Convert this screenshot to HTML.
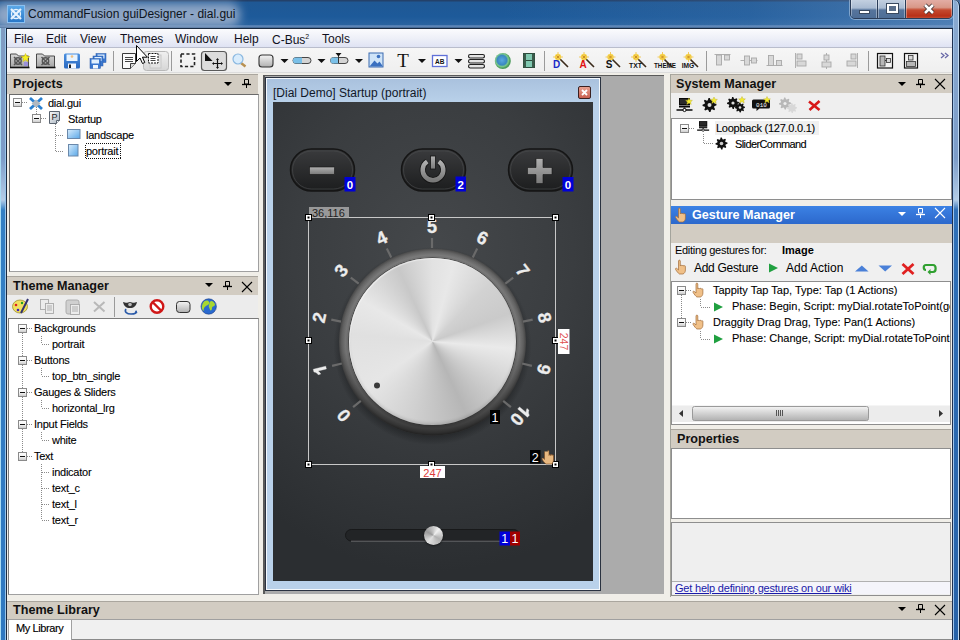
<!DOCTYPE html>
<html><head><meta charset="utf-8">
<style>
*{box-sizing:border-box;margin:0;padding:0}
html,body{width:960px;height:640px;overflow:hidden}
body{position:relative;background:#5f8bbd;font-family:"Liberation Sans",sans-serif;font-size:11px;color:#000}
.a{position:absolute}
.t{position:absolute;white-space:nowrap;line-height:1}
#title{left:0;top:0;width:960px;height:28px;background:linear-gradient(#23416a 0,#23416a 1px,#1f5894 2px,#1d5a9a 60%,#2a639f 88%,#6a90c0 93%,#3a5f8a 100%)}
#client{left:6px;top:28px;width:947px;height:612px;background:#f0eee8;border-left:1px solid #1a2a40;border-top:1px solid #1a2a40;border-right:1px solid #1e3050}
#menu{left:7px;top:29px;width:945px;height:19px;background:linear-gradient(#fbfbfd,#eef0f8 50%,#dfe3f3);border-bottom:1px solid #b9bdcc}
#menu .t{font-size:12px;top:4px;color:#101020}
#tb{left:7px;top:48px;width:945px;height:25px;background:linear-gradient(#f6f6f6,#efefef);border-bottom:1px solid #dcdcdc}
.hdr{position:absolute;background:#d2ccc2;border-top:1px solid #aaa69e}
.hdr .t{font-weight:bold;font-size:12.6px;color:#111;left:6px;top:3px}
.box{position:absolute;background:#fff;border:1px solid #8e8e8e}
.gt .t{letter-spacing:0 !important}
.tree .t{font-size:11px;color:#000;letter-spacing:-0.25px;-webkit-text-stroke:0.1px #000}
</style></head><body>
<div class="a" id="title"></div>
<div class="a" style="left:500px;top:0;width:460px;height:28px;background:linear-gradient(90deg,rgba(110,150,200,0) 0,rgba(110,150,200,0.15) 250px,rgba(130,165,210,0.45) 460px)"></div>
<div class="a" style="left:-6px;top:3px;width:246px;height:24px;background:#8ea6c6;border-radius:10px;filter:blur(5px)"></div>
<div class="a" style="left:7px;top:5px;width:18px;height:18px;background:linear-gradient(#5aa8e8,#2a78c8);border:1px solid #8ac0f0"></div>
<svg class="a" style="left:7px;top:5px" width="18" height="18"><path d="M4 4l10 10M14 4l-10 10" stroke="#e8f4ff" stroke-width="2.2"/><circle cx="9" cy="9" r="4.5" fill="none" stroke="#e8f4ff" stroke-width="1.3"/></svg>
<div class="a" style="left:850px;top:-2px;width:103px;height:21px;border:1px solid #2a3c58;border-radius:0 0 5px 5px;overflow:hidden;box-shadow:0 0 0 1px rgba(200,220,240,0.5)">
 <div class="a" style="left:0;top:0;width:27px;height:20px;background:linear-gradient(#c6d2e2 0,#a9bbd2 45%,#56749c 55%,#4d6d96 100%);border-right:1px solid #2a3c58;box-shadow:inset 0 0 0 1px rgba(255,255,255,0.35)"></div>
 <div class="a" style="left:27px;top:0;width:28px;height:20px;background:linear-gradient(#c6d2e2 0,#a9bbd2 45%,#56749c 55%,#4d6d96 100%);border-right:1px solid #2a3c58;box-shadow:inset 0 0 0 1px rgba(255,255,255,0.35)"></div>
 <div class="a" style="left:55px;top:0;width:46px;height:20px;background:linear-gradient(#e4b0a8 0,#d89888 42%,#c44a30 55%,#b83018 85%,#c85a40 100%);box-shadow:inset 0 0 0 1px rgba(255,255,255,0.35)"></div>
</div>
<div class="a" style="left:859px;top:10px;width:11px;height:4px;background:#fff;border:1px solid #3a4a60"></div>
<div class="a" style="left:887px;top:4px;width:11px;height:9px;background:#5a6e8a;border:2px solid #fff;outline:1px solid #3a4a60"></div>
<svg class="a" style="left:922px;top:2px" width="14" height="14"><path d="M3 3l8 8M11 3l-8 8" stroke="#3a2a2a" stroke-width="4.2"/><path d="M3 3l8 8M11 3l-8 8" stroke="#fff" stroke-width="2.6"/></svg>
<div class="t" style="left:28px;top:8px;font-size:12px;color:#0c1420">CommandFusion guiDesigner - dial.gui</div>
<div class="a" id="client"></div>
<div class="a" style="left:0;top:28px;width:6px;height:612px;background:linear-gradient(#809cc2 0,#7c9cc8 130px,#b4cce6 172px,#3480c4 182px,#2f78c0 612px);border-left:1px solid #a8dcf4;border-right:1px solid #98c4ea"></div>
<div class="a" style="left:953px;top:0px;width:7px;height:640px;border-top-right-radius:6px;background:linear-gradient(#8aaad0 0,#7c9cc8 158px,#b4cce6 200px,#2f70b8 210px,#2762a8 640px);border-left:1px solid #a0c4ea;border-right:1px solid #0e1e34;box-shadow:inset -1px 0 0 #c0d8f0"></div>
<div class="a" id="menu">
 <div class="t" style="left:7px">File</div>
 <div class="t" style="left:39px">Edit</div>
 <div class="t" style="left:73px">View</div>
 <div class="t" style="left:113px">Themes</div>
 <div class="t" style="left:168px">Window</div>
 <div class="t" style="left:227px">Help</div>
 <div class="t" style="left:265px">C-Bus<span style="font-size:7px;vertical-align:5px">2</span></div>
 <div class="t" style="left:315px">Tools</div>
</div>
<div class="a" id="tb"></div>

<!-- left dock -->
<div class="hdr" style="left:7px;top:74px;width:251px;height:20px"><div class="t" style="top:3px">Projects</div></div>
<div class="box tree" style="left:9px;top:94px;width:250px;height:178px;border-color:#6a6a6a #a0a0a0 #a0a0a0 #6a6a6a">
 <div class="t" style="left:38px;top:3px">dial.gui</div>
 <div class="t" style="left:58px;top:19px">Startup</div>
 <div class="t" style="left:76px;top:35px">landscape</div>
 <div class="t" style="left:76px;top:51px">portrait</div>
</div>
<div class="hdr" style="left:7px;top:276px;width:251px;height:19px"><div class="t">Theme Manager</div></div>
<div class="a" style="left:7px;top:295px;width:251px;height:23px;background:#ececec"></div>
<div class="box tree" style="left:8px;top:318px;width:251px;height:277px;border-color:#7a7a7a #a0a0a0 #a0a0a0 #7a7a7a">
 <div class="t" style="left:25px;top:4px">Backgrounds</div>
 <div class="t" style="left:43px;top:20px">portrait</div>
 <div class="t" style="left:25px;top:36px">Buttons</div>
 <div class="t" style="left:43px;top:52px">top_btn_single</div>
 <div class="t" style="left:25px;top:68px">Gauges &amp; Sliders</div>
 <div class="t" style="left:43px;top:84px">horizontal_lrg</div>
 <div class="t" style="left:25px;top:100px">Input Fields</div>
 <div class="t" style="left:43px;top:116px">white</div>
 <div class="t" style="left:25px;top:132px">Text</div>
 <div class="t" style="left:43px;top:148px">indicator</div>
 <div class="t" style="left:43px;top:164px">text_c</div>
 <div class="t" style="left:43px;top:180px">text_l</div>
 <div class="t" style="left:43px;top:196px">text_r</div>
</div>

<!-- mdi -->
<div class="a" style="left:263px;top:75px;width:401px;height:519px;background:#ababab;border-left:2px solid #5a5a5a;border-top:1px solid #5a5a5a"></div>
<div class="a" style="left:265px;top:77px;width:336px;height:514px;background:linear-gradient(#a9c1dd,#b9d1ea 25px);border:1px solid #2a3240;box-shadow:inset 0 0 0 1px #f4f8fc"></div>
<div class="t" style="left:273px;top:87px;font-size:12px;color:#101828">[Dial Demo] Startup (portrait)</div>
<div class="a" style="left:578px;top:86px;width:13px;height:13px;border:1px solid #3a2020;border-radius:2px;background:linear-gradient(#e8a090,#c86050)"></div>
<svg class="a" style="left:578px;top:86px" width="13" height="13"><path d="M4 4l5 5M9 4l-5 5" stroke="#fff" stroke-width="1.8"/></svg>
<div class="a" style="left:273px;top:102px;width:320px;height:479px;background:radial-gradient(ellipse 280px 320px at 160px 150px,#45484b,#3a3d40 50%,#2b2e31)"></div>

<!-- right dock -->
<div class="a" style="left:670px;top:74px;width:1px;height:523px;background:#a4a49c"></div>
<div class="hdr" style="left:671px;top:74px;width:281px;height:19px"><div class="t" style="left:5px">System Manager</div></div>
<div class="a" style="left:671px;top:93px;width:281px;height:25px;background:#efefef"></div>
<div class="box tree" style="left:671px;top:118px;width:281px;height:82px">
 <div class="a" style="left:43px;top:2px;width:104px;height:14px;background:#f0f0f0"></div>
 <div class="t" style="left:44px;top:4px">Loopback (127.0.0.1)</div>
 <div class="t" style="left:63px;top:20px;letter-spacing:-0.6px">SliderCommand</div>
</div>
<div class="a" style="left:671px;top:206px;width:281px;height:18px;background:linear-gradient(#3c82e4,#2c68cc)"><div class="t" style="left:21px;top:3px;font-weight:bold;font-size:12.6px;color:#fff">Gesture Manager</div></div>
<div class="hdr" style="left:671px;top:224px;width:281px;height:19px;border-top:none"></div>
<div class="a" style="left:671px;top:243px;width:281px;height:38px;background:#f0f0f0">
 <div class="t" style="left:4px;top:2px;font-size:11px;letter-spacing:-0.3px">Editing gestures for:</div>
 <div class="t" style="left:111px;top:2px;font-size:11px;font-weight:bold">Image</div>
 <div class="t" style="left:23px;top:19px;font-size:12px;letter-spacing:-0.3px">Add Gesture</div>
 <div class="t" style="left:115px;top:19px;font-size:12px">Add Action</div>
</div>
<div class="box tree gt" style="left:671px;top:281px;width:280px;height:144px;overflow:hidden">
 <div class="t" style="left:41px;top:3px">Tappity Tap Tap, Type: Tap (1 Actions)</div>
 <div class="t" style="left:60px;top:19px">Phase: Begin, Script: myDial.rotateToPoint(gesture)</div>
 <div class="t" style="left:41px;top:35px">Draggity Drag Drag, Type: Pan(1 Actions)</div>
 <div class="t" style="left:60px;top:51px">Phase: Change, Script: myDial.rotateToPoint(gesture)</div>
</div>
<div class="hdr" style="left:671px;top:429px;width:280px;height:19px"><div class="t">Properties</div></div>
<div class="box" style="left:671px;top:448px;width:280px;height:71px"></div>
<div class="box" style="left:671px;top:522px;width:280px;height:74px;background:#efefef"></div>
<div class="a" style="left:672px;top:581px;width:278px;height:13px;background:#f4f4fa;border-top:1px solid #b0b0b0"></div>
<div class="t" style="left:675px;top:583px;font-size:11px;color:#1a1aa8;text-decoration:underline;letter-spacing:-0.2px">Get help defining gestures on our wiki</div>

<!-- bottom -->
<div class="hdr" style="left:7px;top:601px;width:945px;height:18px"><div class="t" style="top:2px">Theme Library</div></div>
<div class="a" style="left:7px;top:619px;width:945px;height:21px;background:#f0f0f0;border-top:1px solid #a0a0a0"></div>
<div class="a" style="left:8px;top:619px;width:64px;height:21px;background:#fff;border:1px solid #a0a0a0;border-bottom:none"></div>
<div class="a" style="left:72px;top:639px;width:880px;height:1px;background:#8a8a8a"></div>
<div class="t" style="left:16px;top:623px;font-size:11px;letter-spacing:-0.4px;-webkit-text-stroke:0.15px #000">My Library</div>

<!-- CANVAS -->
<svg class="a" style="left:0;top:0" width="960" height="640" viewBox="0 0 960 640">
<defs>
 <linearGradient id="btng" x1="0" y1="0" x2="0" y2="1"><stop offset="0" stop-color="#3a3b3d"/><stop offset="1" stop-color="#1c1d1e"/></linearGradient>
 <linearGradient id="glg" x1="0" y1="0" x2="0" y2="1"><stop offset="0" stop-color="#b0b0b0"/><stop offset="1" stop-color="#7a7a7a"/></linearGradient>
 <linearGradient id="ringg" x1="0" y1="0" x2="0" y2="1"><stop offset="0" stop-color="#6a6a6a"/><stop offset="0.6" stop-color="#505050"/><stop offset="1" stop-color="#2a2a2a"/></linearGradient>
 <radialGradient id="ringr" cx="0.5" cy="0.5" r="0.5"><stop offset="0.86" stop-color="#5a5a5a"/><stop offset="0.89" stop-color="#6a6a6a"/><stop offset="0.93" stop-color="#7a7a7a"/><stop offset="0.97" stop-color="#646464"/><stop offset="1" stop-color="#484848"/></radialGradient>
 <linearGradient id="ringsh" x1="0" y1="0" x2="0" y2="1"><stop offset="0" stop-color="#000" stop-opacity="0"/><stop offset="0.55" stop-color="#000" stop-opacity="0.05"/><stop offset="1" stop-color="#000" stop-opacity="0.55"/></linearGradient>
 <radialGradient id="shd"><stop offset="0.85" stop-color="#1a1c1e" stop-opacity="0.9"/><stop offset="1" stop-color="#1a1c1e" stop-opacity="0"/></radialGradient>
 <g id="pill"><rect x="0.5" y="0.5" width="64" height="42" rx="21" fill="url(#btng)" stroke="#151515" stroke-width="1.5"/><rect x="2.5" y="2.5" width="60" height="38" rx="19" fill="none" stroke="#4a4b4d" stroke-width="0.8" opacity="0.8"/></g>
</defs>
<use href="#pill" x="290" y="148.5"/><use href="#pill" x="401" y="148.5"/><use href="#pill" x="508" y="148.5"/>
<rect x="309.5" y="167" width="25" height="7.5" fill="url(#glg)" stroke="#151515" stroke-width="0.6"/>
<path d="M527.5 167.5h8.5v-9h7v9h9v7h-9v9h-7v-9h-8.5z" fill="url(#glg)" stroke="#151515" stroke-width="0.6"/>
<path d="M427.2 161.5A10.3 10.3 0 1 0 438.8 161.5" fill="none" stroke="#151515" stroke-width="6.2"/>
<path d="M427.2 161.5A10.3 10.3 0 1 0 438.8 161.5" fill="none" stroke="url(#glg)" stroke-width="4.5"/>
<rect x="430.5" y="156" width="5" height="13" fill="url(#glg)" stroke="#151515" stroke-width="0.8"/>
<!-- dial -->
<circle cx="432.5" cy="346" r="99" fill="url(#shd)"/>
<circle cx="432.5" cy="342" r="93.5" fill="url(#ringr)"/>
<circle cx="432.5" cy="342" r="93.5" fill="url(#ringsh)"/>
<g stroke="#6a6a6a" stroke-width="2.2"><path d="M360.8 400.8L353.1 407.2"/><path d="M341.8 363.5L332.1 365.9"/><path d="M341.0 321.7L331.3 319.6"/><path d="M358.7 283.7L350.8 277.6"/><path d="M391.2 257.4L386.8 248.4"/><path d="M432.0 248.0L432.0 238.0"/><path d="M472.8 257.4L477.2 248.4"/><path d="M505.3 283.7L513.2 277.6"/><path d="M523.0 321.7L532.7 319.6"/><path d="M522.2 363.5L531.9 365.9"/><path d="M503.2 400.8L510.9 407.2"/></g>
<g fill="#ececec" stroke="#ececec" stroke-width="0.35" font-family="Liberation Sans" font-weight="bold" font-size="18" text-anchor="middle">
<g transform="translate(343.5 415.7) rotate(-130)"><text x="0" y="6.5">0</text></g>
<g transform="translate(319.9 369.4) rotate(-104)"><path d="M0.2 -6.4h2.8v12.8h-2.8v-8.6c-1 .9-2.3 1.5-3.6 1.9v-2.6c1.5-.5 2.8-1.5 3.6-3.5z" transform="translate(-1.3 0)"/></g>
<g transform="translate(319.0 317.5) rotate(-78)"><text x="0" y="6.5">2</text></g>
<g transform="translate(341.0 270.4) rotate(-52)"><text x="0" y="6.5">3</text></g>
<g transform="translate(381.4 237.7) rotate(-26)"><text x="0" y="6.5">4</text></g>
<g transform="translate(432.0 226.0) rotate(0)"><text x="0" y="6.5">5</text></g>
<g transform="translate(482.6 237.7) rotate(26)"><text x="0" y="6.5">6</text></g>
<g transform="translate(523.0 270.4) rotate(52)"><text x="0" y="6.5">7</text></g>
<g transform="translate(545.0 317.5) rotate(78)"><text x="0" y="6.5">8</text></g>
<g transform="translate(544.1 369.4) rotate(104)"><text x="0" y="6.5">9</text></g>
<g transform="translate(520.5 415.7) rotate(130)"><path d="M0.2 -6.4h2.8v12.8h-2.8v-8.6c-1 .9-2.3 1.5-3.6 1.9v-2.6c1.5-.5 2.8-1.5 3.6-3.5z" transform="translate(-6.3 0)"/><text x="5" y="6.5">0</text></g>
</g>
</svg>
<div class="a" style="left:348.6px;top:257.6px;width:167.4px;height:167.4px;border-radius:50%;background:conic-gradient(from 0deg,#e2e2e2,#e8e8e8 15deg,#d2d2d2 45deg,#cacaca 70deg,#eaeaea 95deg,#d4d4d4 120deg,#b6b6b6 155deg,#d0d0d0 195deg,#e6e6e6 235deg,#e0e0e0 275deg,#e8e8e8 300deg,#c8c8c8 335deg,#e2e2e2 360deg);box-shadow:inset 1px 1px 1px rgba(255,255,255,0.5),inset 0 -2px 3px rgba(0,0,0,0.12),0 0 0 0.6px #333"></div>
<svg class="a" style="left:0;top:0" width="960" height="640" viewBox="0 0 960 640">
<circle cx="377" cy="385.5" r="3" fill="#3a3a3a"/>
<!-- selection -->
<rect x="308.5" y="217.5" width="247" height="247" fill="none" stroke="#c8c8c8" stroke-width="1"/>
<rect x="309" y="207" width="40" height="11" fill="#a8a8a8" opacity="0.85"/>
<text x="312" y="216.5" font-family="Liberation Sans" font-size="11" fill="#222">36,116</text>
<g fill="#fff" stroke="#000" stroke-width="1">
 <rect x="305.5" y="214.5" width="6" height="6"/><rect x="428.5" y="214.5" width="6" height="6"/><rect x="552.5" y="214.5" width="6" height="6"/>
 <rect x="305.5" y="337.5" width="6" height="6"/><rect x="552.5" y="337.5" width="6" height="6"/>
 <rect x="305.5" y="461.5" width="6" height="6"/><rect x="428.5" y="461.5" width="6" height="6"/><rect x="552.5" y="461.5" width="6" height="6"/>
</g>
<g fill="#000"><rect x="307.5" y="216.5" width="2" height="2"/><rect x="430.5" y="216.5" width="2" height="2"/><rect x="554.5" y="216.5" width="2" height="2"/><rect x="307.5" y="339.5" width="2" height="2"/><rect x="554.5" y="339.5" width="2" height="2"/><rect x="307.5" y="463.5" width="2" height="2"/><rect x="430.5" y="463.5" width="2" height="2"/><rect x="554.5" y="463.5" width="2" height="2"/></g>
<rect x="420" y="466" width="25" height="12" fill="#fff"/>
<text x="432.5" y="476.5" font-family="Liberation Sans" font-size="11" fill="#dc3a3a" text-anchor="middle">247</text>
<rect x="558" y="329" width="11.5" height="25" fill="#fff"/>
<text x="563.5" y="341.5" font-family="Liberation Sans" font-size="10.5" fill="#e05050" text-anchor="middle" transform="rotate(90 563.5 341.5)" dy="3.8">247</text>
<!-- badges -->
<g font-family="Liberation Sans" font-weight="bold" font-size="11.5" text-anchor="middle" fill="#fff">
 <rect x="344.5" y="177" width="11" height="14.5" fill="#0000d8"/><text x="350" y="189">0</text>
 <rect x="455.5" y="176.5" width="10.5" height="15" fill="#0000d8"/><text x="460.8" y="189">2</text>
 <rect x="562.5" y="177" width="11" height="14.5" fill="#0000d8"/><text x="568" y="189">0</text>
 <rect x="490" y="410" width="10" height="14" fill="#000"/><text x="495" y="421.5" font-weight="normal" font-size="12.5">1</text>
 <rect x="530" y="450" width="10.5" height="13.5" fill="#000"/><text x="535.2" y="461.5" font-weight="normal" font-size="12.5">2</text>
</g>
<!-- hand cursor -->
<path d="M544.5 451.5v8c-1-1.5-2.5-2-2.5-0.5c1 2 2.5 4 4 5h6c1-1.5 1.5-3 1.5-5v-3.5c0-1-1.5-1-1.5 0c0-1.5-1.5-1.5-1.5 0c0-1.5-1.5-1.5-1.5 0v-4c0-1.5-1.5-1.5-1.5 0" fill="#e8b880" stroke="#7a4a20" stroke-width="0.6"/>
<!-- slider -->
<rect x="345.5" y="529.5" width="174" height="11.5" rx="5.75" fill="#222426" stroke="#18191a" stroke-width="1"/>
<path d="M351 541.2h163" stroke="#6a6c6e" stroke-width="1"/>
<g font-family="Liberation Sans" font-size="12.5" text-anchor="middle" fill="#fff">
 <rect x="499.5" y="531.5" width="10.5" height="14" fill="#0000d8"/><text x="504.8" y="543">1</text>
 <rect x="510" y="531.5" width="10" height="14" fill="#a00000"/><text x="515" y="543">1</text>
</g>
</svg>
<div class="a" style="left:423.5px;top:526px;width:19px;height:19px;border-radius:50%;background:conic-gradient(from 0deg,#c8c8c8,#f0f0f0 40deg,#b0b0b0 120deg,#e0e0e0 220deg,#9a9a9a 300deg,#c8c8c8);box-shadow:0 1px 2px rgba(0,0,0,0.5)"></div>

<!-- MAIN TOOLBAR ICONS -->
<svg class="a" style="left:0;top:0" width="960" height="640" viewBox="0 0 960 640">
<defs>
 <linearGradient id="fold" x1="0" y1="0" x2="0" y2="1"><stop offset="0" stop-color="#d8d8d8"/><stop offset="1" stop-color="#a4a4a4"/></linearGradient>
 <linearGradient id="flop" x1="0" y1="0" x2="0" y2="1"><stop offset="0" stop-color="#4a90e0"/><stop offset="1" stop-color="#2a68c0"/></linearGradient>
 <linearGradient id="btnp" x1="0" y1="0" x2="0" y2="1"><stop offset="0" stop-color="#f0f0f0"/><stop offset="1" stop-color="#d6d6d6"/></linearGradient>
 <linearGradient id="gry" x1="0" y1="0" x2="0" y2="1"><stop offset="0" stop-color="#f4f4f4"/><stop offset="1" stop-color="#b0b0b0"/></linearGradient>
 <radialGradient id="glob" cx="0.45" cy="0.45"><stop offset="0" stop-color="#5aa8e0"/><stop offset="0.6" stop-color="#3a88c0"/><stop offset="0.8" stop-color="#7ac88a"/><stop offset="1" stop-color="#4a9a5a"/></radialGradient>
 <g id="ddm"><path d="M0 0h8l-4 4z" fill="#111"/></g>
 <g id="spark"><circle cx="0" cy="0" r="3.2" fill="#f8d850"/><path d="M-5 0h10M0 -5v10" stroke="#f0c040" stroke-width="0.8"/><path d="M-1.5 -1.5l3 3M1.5 -1.5l-3 3" stroke="#c08020" stroke-width="0.8"/></g>
</defs>
<!-- separators -->
<g fill="#9a9a9a"><rect x="113" y="51" width="1" height="20"/><rect x="171" y="51" width="1" height="20"/><rect x="544" y="51" width="1" height="20"/><rect x="706" y="51" width="1" height="20"/><rect x="868" y="51" width="1" height="20"/></g>
<!-- folders -->
<path d="M10.5 67.5v-13.5h6l2 2h10v11.5z" fill="url(#fold)" stroke="#4a4a4a"/><path d="M10 67.5h19.5" stroke="#111" stroke-width="1.6"/>
<g stroke="#555" stroke-width="1.4" fill="none"><circle cx="18" cy="61" r="3.2"/><path d="M14 57l8 8M22 57l-8 8"/></g>
<path d="M25.5 53.5l1.3 2.8 3 .3-2.3 2 .7 3-2.7-1.6-2.7 1.6.7-3-2.3-2 3-.3z" fill="#f4f020" stroke="#c8b010" stroke-width="0.5"/>
<rect x="24" y="62" width="4" height="4" fill="#9a90d8"/>
<path d="M36.5 67.5v-13.5h6l2 2h10v11.5z" fill="url(#fold)" stroke="#4a4a4a"/><path d="M36 67.5h19.5" stroke="#111" stroke-width="1.6"/>
<g stroke="#555" stroke-width="1.4" fill="none"><circle cx="45.5" cy="61" r="3.2"/><path d="M41.5 57l8 8M49.5 57l-8 8"/></g>
<!-- floppy -->
<rect x="64" y="53.5" width="16" height="15" rx="1.5" fill="url(#flop)"/><rect x="66.5" y="54.5" width="11" height="6.5" fill="#e8f4ff"/><circle cx="72" cy="56.5" r="1.3" fill="#f0c080"/><rect x="68" y="63.5" width="8" height="5" fill="#f4f8ff"/><rect x="69" y="64.5" width="2" height="3.5" fill="#222"/>
<g><rect x="96" y="53.5" width="10" height="9" fill="#3a78d0" stroke="#2a5aa8" stroke-width="0.5"/><rect x="97.5" y="54.5" width="7" height="4" fill="#e0f0ff"/>
<rect x="93" y="56" width="10" height="10" fill="#3a78d0" stroke="#2a5aa8" stroke-width="0.5"/><rect x="94.5" y="57" width="7" height="4" fill="#e0f0ff"/>
<rect x="90" y="58.5" width="10.5" height="10" fill="#3a78d0" stroke="#2a5aa8" stroke-width="0.5"/><rect x="91.5" y="59.5" width="7.5" height="4" fill="#e0f0ff"/><rect x="93" y="65" width="5" height="3.5" fill="#f0f8ff"/></g>
<!-- page -->
<path d="M122.5 53.5h13v10l-5 5h-8z" fill="#fafafa" stroke="#3a3a3a"/><path d="M130.5 68.5v-5h5" fill="#d8d8d8" stroke="#3a3a3a"/>
<g stroke="#444"><path d="M125 57.5h8M125 59.5h8M125 61.5h8"/></g>
<!-- pressed btn 1 -->
<rect x="143.5" y="51.5" width="25" height="19" rx="3" fill="url(#btnp)" stroke="#b8b8b8"/>
<rect x="150" y="55" width="11" height="13" fill="#e4e4e4" stroke="#c8c8c8"/>
<rect x="148.5" y="53.5" width="9.5" height="9.5" fill="#fff" stroke="#111" stroke-dasharray="2,1"/>
<g stroke="#444"><path d="M150.5 56.5h5M150.5 58.5h5M150.5 60.5h5"/></g>
<!-- dashed rect -->
<rect x="181" y="54" width="13.5" height="12.5" fill="none" stroke="#222" stroke-width="1.6" stroke-dasharray="3.2,2.2"/>
<!-- pressed pointer btn -->
<rect x="201.5" y="51.5" width="25" height="19" rx="3" fill="#dcdcdc" stroke="#5a5a5a" stroke-width="1.2"/>
<path d="M205 53l7.5 8h-7.5z" fill="#111"/>
<path d="M217.5 59v9M213 63.5h9" stroke="#111" stroke-width="1.2"/><path d="M217.5 58l-1.5 2h3zM217.5 69l-1.5-2h3zM212 63.5l2-1.5v3zM223 63.5l-2-1.5v3z" fill="#111"/>
<!-- magnifier -->
<path d="M241 63l4.5 3.5" stroke="#b89050" stroke-width="2.5"/>
<circle cx="238" cy="59" r="5" fill="#d8ecfc" stroke="#8ab8e0" stroke-width="1.2"/>
<!-- button icon -->
<rect x="259" y="55" width="14" height="12" rx="3" fill="url(#gry)" stroke="#333" stroke-width="1.1"/>
<use href="#ddm" x="280.5" y="59"/>
<!-- toggle -->
<rect x="293" y="57.5" width="18" height="6" rx="3" fill="#d4d4d4" stroke="#333" stroke-width="0.9"/><path d="M296 57.5h6v6h-6a3 3 0 0 1 0-6z" fill="#7ac0e8"/>
<use href="#ddm" x="317.5" y="59"/>
<!-- slider icon -->
<rect x="330.5" y="57.5" width="17.5" height="6" rx="3" fill="#d4d4d4" stroke="#333" stroke-width="0.9"/><path d="M333.5 57.5h5v6h-5a3 3 0 0 1 0-6z" fill="#7ac0e8"/><path d="M335.5 53h6l-3 3.5z" fill="#111"/><path d="M338.5 56v7" stroke="#333"/>
<use href="#ddm" x="355" y="59"/>
<!-- image -->
<rect x="369" y="53" width="14" height="14" fill="#cfe4f8" stroke="#3a6ab0" stroke-width="1"/><path d="M369.5 66.5l5-6 3 3 2-2 3.5 5z" fill="#3a70c0"/><circle cx="378.5" cy="56.5" r="1.8" fill="#3a70c0"/>
<!-- T -->
<text x="403" y="67" font-family="Liberation Serif" font-size="19" text-anchor="middle" fill="#111">T</text>
<use href="#ddm" x="418" y="59"/>
<!-- AB -->
<rect x="432.5" y="55.5" width="14.5" height="11" fill="#fff" stroke="#6070d8" stroke-width="1.3"/><text x="439.8" y="64" font-family="Liberation Sans" font-weight="bold" font-size="6.5" text-anchor="middle" fill="#111">AB</text>
<use href="#ddm" x="454.5" y="59"/>
<!-- list -->
<g fill="#e4e4e4" stroke="#222" stroke-width="1.1"><rect x="468.5" y="54.5" width="16" height="3.5" rx="1.7"/><rect x="468.5" y="59.5" width="16" height="3.5" rx="1.7"/><rect x="468.5" y="64.5" width="16" height="3.5" rx="1.7"/></g>
<!-- globe -->
<circle cx="502.8" cy="61" r="8" fill="url(#glob)"/>
<!-- film -->
<rect x="523.5" y="53.5" width="11" height="14" fill="#80c8b0" stroke="#2a4a3a"/><rect x="523.5" y="53.5" width="2.5" height="14" fill="#3a5a4a"/><rect x="532" y="53.5" width="2.5" height="14" fill="#3a5a4a"/><path d="M526 60.5h6" stroke="#2a4a3a"/>
<!-- wands -->
<g stroke="#3a2a1a" stroke-width="1.6"><path d="M559 58l9 9M585 58l9 9M611 58l9 9M637 58l9 9M663 58l9 9M689 58l9 9"/></g>
<use href="#spark" x="558" y="57"/><use href="#spark" x="584" y="57"/><use href="#spark" x="610.5" y="57"/><use href="#spark" x="636" y="57"/><use href="#spark" x="662.5" y="57"/><use href="#spark" x="688.5" y="57"/>
<g font-family="Liberation Sans" font-weight="bold" text-anchor="middle">
<text x="556.5" y="67.5" font-size="10" fill="#1a2ac8">D</text>
<text x="583" y="67.5" font-size="10" fill="#e01010">A</text>
<text x="609" y="67.5" font-size="10" fill="#111">S</text>
<text x="635.5" y="67.5" font-size="7" fill="#111" textLength="13" lengthAdjust="spacingAndGlyphs">TXT</text>
<text x="665" y="67.5" font-size="7" fill="#111" textLength="22" lengthAdjust="spacingAndGlyphs">THEME</text>
<text x="688" y="67.5" font-size="7" fill="#111" textLength="12.5" lengthAdjust="spacingAndGlyphs">IMG</text>
</g>
<!-- align icons (disabled) -->
<g fill="#d8d8d8" stroke="#a8a8a8" stroke-width="0.9">
 <path d="M714.5 54.5h16" fill="none"/><rect x="716.5" y="55" width="5" height="10"/><rect x="724.5" y="55" width="5" height="5"/>
 <path d="M740.5 60.5h17" fill="none"/><rect x="744.5" y="56" width="5" height="9"/><rect x="751.5" y="58" width="5" height="5"/>
 <path d="M766.5 65.5h16" fill="none"/><rect x="768.5" y="55.5" width="5" height="10"/><rect x="776.5" y="60.5" width="5" height="5"/>
 <path d="M795.5 53v15" fill="none"/><rect x="797" y="54" width="5" height="5"/><rect x="797" y="61" width="9" height="5"/>
 <path d="M826.5 53v16" fill="none"/><rect x="824" y="55" width="5" height="5"/><rect x="822" y="62" width="9" height="5"/>
 <path d="M857.5 53v15" fill="none"/><rect x="851" y="54" width="5" height="5"/><rect x="847" y="61" width="9" height="5"/>
</g>
<!-- boxed icons -->
<rect x="877.5" y="53.5" width="15" height="14.5" fill="#f4f4f4" stroke="#111" stroke-width="1.2"/><rect x="880" y="56" width="5" height="10" fill="#b8b8b8" stroke="#333" stroke-width="0.8"/><rect x="886.5" y="58.5" width="4" height="4" fill="#d8d8d8" stroke="#333" stroke-width="0.8"/><path d="M885 60.5h1.5" stroke="#333"/>
<rect x="904.5" y="53.5" width="13" height="14.5" fill="#f4f4f4" stroke="#111" stroke-width="1.2"/><rect x="908.5" y="55.5" width="4.5" height="4.5" fill="#d8d8d8" stroke="#333" stroke-width="0.8"/><rect x="906.5" y="61.5" width="9" height="5" fill="#b8b8b8" stroke="#333" stroke-width="0.8"/>
<!-- chevron -->
<path d="M941 53l3 2.5-3 2.5M945 53l3 2.5-3 2.5" fill="none" stroke="#6a6aa8" stroke-width="1.3"/>
<!-- mouse cursor -->
<path d="M136.5 45.5v16l3.5-3.5 2.5 5.5 2.3-1-2.4-5.3h5z" fill="#fff" stroke="#000" stroke-width="1"/>
</svg>

<!-- PANEL ICONS -->
<svg class="a" style="left:0;top:0" width="960" height="640" viewBox="0 0 960 640">
<defs>
 <path id="g7" d="M-1.0 -6.9L0.3 -7.0L1.2 -4.9L2.1 -4.5L4.2 -5.6L5.2 -4.7L4.3 -2.6L4.7 -1.7L6.9 -1.0L7.0 0.3L4.9 1.2L4.5 2.1L5.6 4.2L4.7 5.2L2.6 4.3L1.7 4.7L1.0 6.9L-0.3 7.0L-1.2 4.9L-2.1 4.5L-4.2 5.6L-5.2 4.7L-4.3 2.6L-4.7 1.7L-6.9 1.0L-7.0 -0.3L-4.9 -1.2L-4.5 -2.1L-5.6 -4.2L-4.7 -5.2L-2.6 -4.3L-1.7 -4.7Z"/><path id="g6" d="M-0.9 -5.9L0.3 -6.0L1.0 -4.2L1.8 -3.9L3.6 -4.8L4.4 -4.0L3.7 -2.2L4.0 -1.4L5.9 -0.9L6.0 0.3L4.2 1.0L3.9 1.8L4.8 3.6L4.0 4.4L2.2 3.7L1.4 4.0L0.9 5.9L-0.3 6.0L-1.0 4.2L-1.8 3.9L-3.6 4.8L-4.4 4.0L-3.7 2.2L-4.0 1.4L-5.9 0.9L-6.0 -0.3L-4.2 -1.0L-3.9 -1.8L-4.8 -3.6L-4.0 -4.4L-2.2 -3.7L-1.4 -4.0Z"/><path id="g5" d="M-0.7 -4.9L0.2 -5.0L0.9 -3.5L1.5 -3.3L3.0 -4.0L3.7 -3.4L3.1 -1.9L3.4 -1.2L4.9 -0.7L5.0 0.2L3.5 0.9L3.3 1.5L4.0 3.0L3.4 3.7L1.9 3.1L1.2 3.4L0.7 4.9L-0.2 5.0L-0.9 3.5L-1.5 3.3L-3.0 4.0L-3.7 3.4L-3.1 1.9L-3.4 1.2L-4.9 0.7L-5.0 -0.2L-3.5 -0.9L-3.3 -1.5L-4.0 -3.0L-3.4 -3.7L-1.9 -3.1L-1.2 -3.4Z"/>
 <g id="star"><path d="M0 -3.5l1 2.2 2.4.2-1.8 1.6.6 2.4-2.2-1.3-2.2 1.3.6-2.4-1.8-1.6 2.4-.2z" fill="#f4ec30" stroke="#b8a820" stroke-width="0.4"/></g>
 <g id="net"><rect x="2" y="-0.5" width="11" height="7.5" fill="#080808"/><rect x="3" y="0.5" width="9" height="5" fill="#2a2a2a"/><rect x="2" y="7.5" width="11" height="1.5" fill="#080808"/><path d="M7.5 9v2M-0.5 11.5h16" stroke="#080808" stroke-width="1.5"/><circle cx="7.5" cy="11.5" r="1.6" fill="#fff" stroke="#080808"/></g>
 <g id="hand"><path d="M3.5 1.5c0-1.2 1.8-1.2 1.8 0v5c.3-1 1.7-1 1.8 0 .3-.9 1.6-.9 1.7.1.4-.7 1.6-.6 1.6.4v3.5c0 2-1 3.5-2.5 4h-3.5c-1.2-.8-2.5-2.5-3.8-4.5-.6-1 .5-1.8 1.3-1l1.6 1.5z" fill="#f0c088" stroke="#a06a38" stroke-width="0.7"/></g>
 <g id="garr"><path d="M0 0l9 4.5-9 4.5z" fill="#20a040"/></g>
 <g id="xbd"><rect x="0.5" y="0.5" width="8" height="8" fill="url(#xbg2)" stroke="#979797"/><path d="M2 4.5h5" stroke="#222"/></g>
 <linearGradient id="xbg2" x1="0" y1="0" x2="0" y2="1"><stop offset="0" stop-color="#fff"/><stop offset="1" stop-color="#d8d8d8"/></linearGradient>
 <linearGradient id="pgray" x1="0" y1="0" x2="1" y2="1"><stop offset="0" stop-color="#fafafa"/><stop offset="1" stop-color="#a8b4c0"/></linearGradient>
 <linearGradient id="pblue" x1="0" y1="0" x2="1" y2="1"><stop offset="0" stop-color="#d8ecfc"/><stop offset="1" stop-color="#5aa8e8"/></linearGradient>
</defs>
<!-- panel toolbar separators -->
<rect x="114" y="297" width="1" height="20" fill="#9a9a9a"/>
<!-- theme mgr toolbar -->
<ellipse cx="20" cy="306.5" rx="7.5" ry="6.5" fill="#f0e060" stroke="#a09030" stroke-width="0.8"/>
<circle cx="16" cy="305" r="1.3" fill="#e02020"/><circle cx="18" cy="310" r="1.3" fill="#4020c0"/><circle cx="22" cy="303" r="1.2" fill="#20a020"/>
<path d="M28 299l-7 14" stroke="#303070" stroke-width="2"/>
<g fill="#ececec" stroke="#a8a8a8" stroke-width="0.9"><rect x="40.5" y="299.5" width="8" height="10"/><rect x="45.5" y="303.5" width="8" height="10"/><path d="M47 306h5M47 308h5M47 310h5" fill="none"/>
<rect x="66" y="300" width="13" height="14" rx="2" fill="#d0d0d0"/><rect x="70.5" y="304.5" width="9" height="10"/><path d="M72 307h6M72 309h6M72 311h6" fill="none"/></g>
<path d="M94 302l10.5 9.5M104.5 302l-10.5 9.5" stroke="#b8b8b8" stroke-width="2"/>
<path d="M123 302c3 1 4 1 7 0 3 1 4 1 7 0-1 4-3 6-7 6s-6-2-7-6z" fill="#333"/><circle cx="130" cy="304.5" r="1.8" fill="#bbb"/>
<path d="M126 309c-2 3 1 5 5 5s6-1 5-3" fill="none" stroke="#2a5aa8" stroke-width="1.6"/><path d="M136 310l1.5 3-3 .5z" fill="#2a5aa8"/>
<circle cx="157" cy="306.5" r="6.3" fill="#fff" stroke="#d01818" stroke-width="2.4"/><path d="M152.5 302l9 9" stroke="#d01818" stroke-width="2.4"/>
<rect x="176.5" y="301.5" width="13.5" height="11" rx="3" fill="url(#gry)" stroke="#333" stroke-width="1"/>
<circle cx="208.7" cy="306.5" r="7.7" fill="#2a6ad0" stroke="#1a3a80" stroke-width="0.6"/><path d="M203 303c2-3 5-3 6-1 1 2-1 3-3 4-2 1-3 4-2 5-2-1-3-4-1-8zM211 301c2 0 4 2 4 4-1 2-3 1-3 3s-1 3-2 2c0-2-2-3-1-5s0-3 2-4z" fill="#a8d830"/>
<!-- system mgr toolbar -->
<use href="#net" x="677" y="98.5"/><use href="#star" x="689" y="101.5"/>
<use href="#g7" x="709.5" y="105" fill="#111"/><circle cx="709.5" cy="105" r="2" fill="#ddd"/><use href="#star" x="714" y="100.5"/>
<use href="#g6" x="733" y="103" fill="#111"/><circle cx="733" cy="103" r="1.6" fill="#ddd"/><use href="#g5" x="740" y="107.5" fill="#111"/><circle cx="740" cy="107.5" r="1.3" fill="#ddd"/><use href="#star" x="742" y="100"/>
<path d="M753.5 99.5h15a1.5 1.5 0 0 1 1.5 1.5v6a1.5 1.5 0 0 1-1.5 1.5h-9l-3 2.5v-2.5h-3a1.5 1.5 0 0 1-1.5-1.5v-6a1.5 1.5 0 0 1 1.5-1.5z" fill="#111"/>
<text x="761.5" y="106.5" font-family="Liberation Mono" font-size="6" fill="#fff" text-anchor="middle">010</text><use href="#star" x="767" y="100"/>
<use href="#g6" x="785" y="103.5" fill="#b8b8b8"/><circle cx="785" cy="103.5" r="1.6" fill="#eee"/><use href="#g5" x="792" y="108" fill="#d8d8d8"/>
<path d="M809 101.5l10.5 8.5M819.5 101l-10 9" stroke="#d81818" stroke-width="2.6"/>
<!-- tree icons -->
<rect x="29" y="97" width="14" height="13" fill="#fff"/><path d="M30 98l12 11M42 98l-12 11" stroke="#2a80d0" stroke-width="2.8"/><path d="M36 99.5l4.5 4-4.5 4-4.5-4z" fill="#b0b8c0"/>
<path d="M49.5 111.5h10v9l-3 3h-7z" fill="url(#pgray)" stroke="#5a6470"/><path d="M56.5 123.5v-3h3" fill="#f0f4f8" stroke="#5a6470"/><text x="54.5" y="119.5" font-family="Liberation Sans" font-size="9" fill="#222" text-anchor="middle">P</text>
<rect x="67.5" y="129.5" width="12.5" height="9" fill="url(#pblue)" stroke="#6a88aa"/>
<rect x="68.5" y="144.5" width="9.5" height="11.5" fill="url(#pblue)" stroke="#6a88aa"/>
<rect x="85.5" y="143.5" width="35" height="15" fill="none" stroke="#111" stroke-dasharray="1,1" shape-rendering="crispEdges"/>
<g transform="translate(697.5 121.5) scale(0.75)"><use href="#net"/></g>
<use href="#g6" x="721.5" y="143.5" fill="#111"/><circle cx="721.5" cy="143.5" r="1.8" fill="#ccc"/>
<!-- gesture toolbar -->
<use href="#hand" x="675" y="259.5"/>
<use href="#hand" x="675" y="207.5"/>
<use href="#garr" x="769" y="263.5"/>
<path d="M855 271.5l6.8-6 6.8 6z" fill="#4a80d8"/><path d="M878.5 265.5h13.5l-6.8 6z" fill="#4a80d8"/>
<path d="M902.5 264l11 10M913.5 264l-11 10" stroke="#e02020" stroke-width="2.8"/>
<path d="M926 270c-3 0-3-5 0-5h7c3.5 0 3.5 7 0 7h-4" fill="none" stroke="#30a030" stroke-width="2.2"/><path d="M930.5 269l-3 3 3 3z" fill="#30a030"/>
<!-- gesture tree -->
<use href="#hand" x="692.5" y="282.5"/><use href="#hand" x="692.5" y="314.5"/>
<use href="#garr" x="714" y="302.5"/><use href="#garr" x="714" y="334.5"/>
<!-- scrollbar -->
<rect x="672" y="405.5" width="278" height="16.5" fill="#ececec"/>
<rect x="692.5" y="406.5" width="176" height="14" rx="2" fill="url(#gry)" stroke="#9a9a9a"/>
<path d="M776.5 410v6M778.5 410v6M780.5 410v6M782.5 410v6" stroke="#555"/>
<path d="M683 410l-4 3.5 4 3.5z" fill="#333"/><path d="M939 410l4 3.5-4 3.5z" fill="#333"/>
</svg>

<!-- OVERLAY -->
<svg class="a" style="left:0;top:0" width="960" height="640" viewBox="0 0 960 640">
<defs>
 <linearGradient id="xbg" x1="0" y1="0" x2="0" y2="1"><stop offset="0" stop-color="#fff"/><stop offset="0.5" stop-color="#f4f4f4"/><stop offset="1" stop-color="#c8c8c8"/></linearGradient>
 <g id="xb"><rect x="0.5" y="0.5" width="8" height="8" fill="url(#xbg)" stroke="#8a8a8a"/><path d="M2 4.5h5" stroke="#111"/></g>
 <g id="dd"><path d="M0 0h8l-4 4z" fill="#000"/></g>
 <g id="pin"><path d="M2.5 0.5h4v4.5h-4z" fill="none" stroke="#000"/><path d="M0 5.5h9" stroke="#000" stroke-width="1.3"/><path d="M4.5 6v3" stroke="#000"/></g>
 <g id="cx"><path d="M0 0l10 10M10 0l-10 10" stroke="#000" stroke-width="1.1"/></g>
</defs>
<!-- header buttons -->
<use href="#dd" x="224" y="82"/><use href="#pin" x="242" y="79"/>
<use href="#dd" x="205" y="283"/><use href="#pin" x="223" y="281"/><use href="#cx" x="242" y="282"/>
<use href="#dd" x="898" y="82"/><use href="#pin" x="916" y="79"/><use href="#cx" x="935" y="79"/>
<g fill="#fff" stroke="#fff"><path d="M898 212h8l-4 4z" stroke="none"/><path d="M918.5 208.5h4v4.5h-4z" fill="none"/><path d="M916 214.5h9" stroke-width="1.3"/><path d="M920.5 215v3" /><path d="M935 208l10 10M945 208l-10 10" stroke-width="1.1"/></g>
<use href="#dd" x="898" y="607"/><use href="#pin" x="916" y="604"/><use href="#cx" x="935" y="605"/>

<!-- projects tree lines -->
<g stroke="#8a8a8a" stroke-dasharray="1,1" fill="none">
 <path d="M22 102.5h5M41 118.5h5M36.5 107v7M55.5 124v27M56 135.5h8M56 151.5h8"/>
</g>
<use href="#xb" x="13" y="98"/><use href="#xb" x="32" y="114"/>
<!-- theme tree lines -->
<g stroke="#8a8a8a" stroke-dasharray="1,1" fill="none">
 <path d="M22.5 333v119M27 328.5h5M27 360.5h5M27 392.5h5M27 424.5h5M27 456.5h5"/>
 <path d="M41.5 336v8M42 344.5h8M41.5 368v8M42 376.5h8M41.5 400v8M42 408.5h8M41.5 432v8M42 440.5h8M41.5 464v56M42 472.5h8M42 488.5h8M42 504.5h8M42 520.5h8"/>
</g>
<use href="#xb" x="18" y="324"/><use href="#xb" x="18" y="356"/><use href="#xb" x="18" y="388"/><use href="#xb" x="18" y="420"/><use href="#xb" x="18" y="452"/>
<!-- system tree -->
<g stroke="#8a8a8a" stroke-dasharray="1,1" fill="none"><path d="M689 128.5h6M703.5 134v10M704 143.5h10"/></g>
<use href="#xb" x="680" y="124"/>
<!-- gesture tree -->
<g stroke="#8a8a8a" stroke-dasharray="1,1" fill="none"><path d="M686 290.5h6M686 322.5h6M681.5 295v24M700.5 299v8M701 307.5h9M700.5 331v8M701 339.5h9"/></g>
<use href="#xb" x="677" y="286"/><use href="#xb" x="677" y="318"/>
</svg>
</body></html>
